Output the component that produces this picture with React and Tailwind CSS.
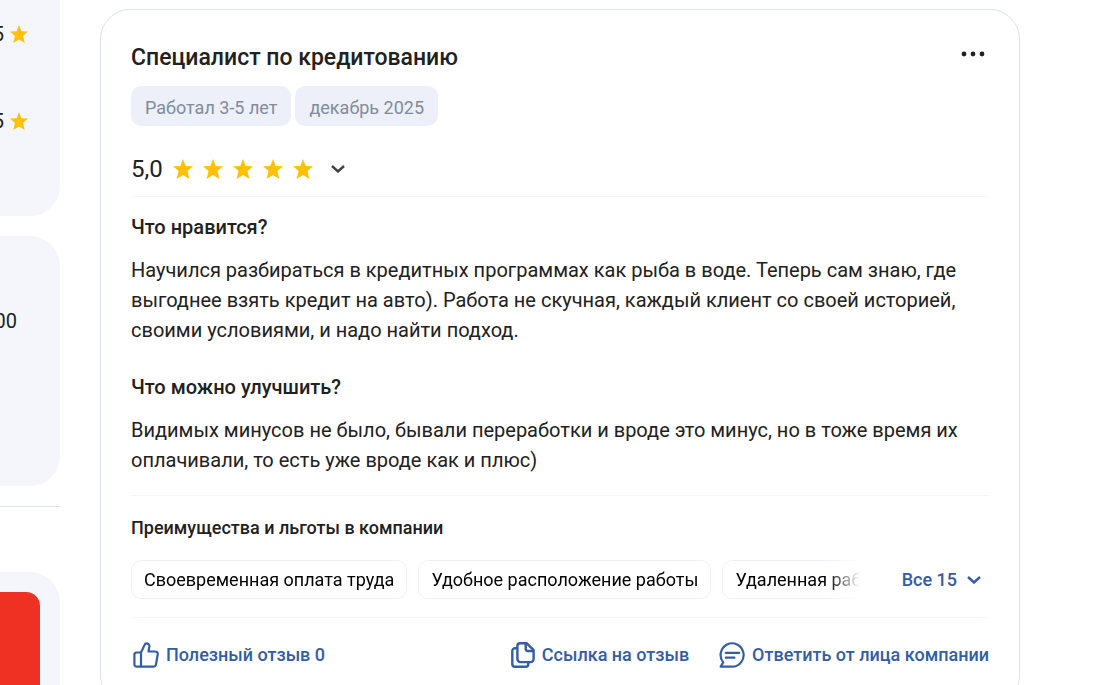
import clsx from "clsx";

const benefits = ["Своевременная оплата труда", "Удобное расположение работы", "Удаленная работа"];

function Star({ className }) {
  return (
    <svg viewBox="0 0 20 20" className={clsx("shrink-0", className)} fill="#ffc107" aria-hidden="true">
      <path d="M10 0l2.700 6.900 7.300.4-5.500 4.800 1.900 7.900L10 16 3.600 20l1.900-7.900L0 7.300l7.300-.4z" />
    </svg>
  );
}

function Chevron() {
  return (
    <svg viewBox="0 0 14 8" className="h-2 w-[14px]" fill="none" stroke="currentColor" strokeWidth="2.4" aria-hidden="true">
      <path d="M1 1l6 5.5L13 1" />
    </svg>
  );
}

function ThumbIcon() {
  return (
    <svg viewBox="0 0 26 26" className="h-[26px] w-[26px]" fill="none" stroke="currentColor" strokeWidth="2.2" strokeLinejoin="round" aria-hidden="true">
      <path d="M8 10.500H3.600A2.200 2.200 0 0 0 1.400 12.700v9.700A2.200 2.200 0 0 0 3.600 24.600H8z" />
      <path d="M8 10.500l3.600-7.600c.4-1 1-1.600 1.800-1.600 1.700 0 3.100 1.400 3 3.100l-.9 5.100h6.400c1.900 0 3.100 1.300 2.800 3l-1.700 9.900c-.2 1.300-1.200 2.200-2.600 2.200H8" />
    </svg>
  );
}

function CopyIcon() {
  return (
    <svg viewBox="0 0 24 26" className="h-[26px] w-6" fill="none" stroke="currentColor" strokeWidth="2.4" strokeLinejoin="round" aria-hidden="true">
      <path d="M9 1.3h6.800l6.800 6.800v9a3 3 0 0 1-3 3H9.400a3 3 0 0 1-3-3V4a2.700 2.700 0 0 1 2.600-2.700z" />
      <path d="M14.700 1.300v5.800a1.900 1.900 0 0 0 1.900 1.900h6" />
      <path d="M6.400 6.200H4a2.700 2.700 0 0 0-2.700 2.700V22a2.700 2.700 0 0 0 2.700 2.700h10.600a2.700 2.700 0 0 0 2.700-2.700v-1.900" />
    </svg>
  );
}

function ReplyIcon() {
  return (
    <svg viewBox="0 0 26 26" className="h-[26px] w-[26px]" fill="none" stroke="currentColor" strokeWidth="2.2" strokeLinecap="round" strokeLinejoin="round" aria-hidden="true">
      <path d="M4.200 20.400A11.500 11.700 0 1 1 13 24.700H1.600z" />
      <path d="M6.800 10.900h13.400M6.800 15.700h8.600" />
    </svg>
  );
}

function ActionButton({ icon: Icon, children }) {
  return (
    <button type="button" className="flex items-center gap-[7px] text-lg font-medium text-[#335da4]">
      <Icon />
      {children}
    </button>
  );
}

function Sidebar() {
  return (
    <aside className="w-[60px] shrink-0 overflow-hidden text-xl text-[#212121]">
      <div className="flex h-[216px] flex-col items-end gap-[57px] rounded-br-[30px] bg-[#f4f6fc] pt-[19px] pr-8">
        {["rating", "salary"].map((key) => (
          <div key={key} className="flex items-center gap-[6px] whitespace-nowrap leading-[30px]">
            <span>4,5</span>
            <Star className="h-[18px] w-[18px]" />
          </div>
        ))}
      </div>
      <div className="mt-5 flex h-[250px] items-center justify-end rounded-r-[30px] bg-[#f4f6fc] pr-[43px]">
        <span className="pb-20">18:00</span>
      </div>
      <hr className="mt-5 border-[#dce1eb]" />
      <div className="mt-[65px] h-80 rounded-r-[30px] bg-[#f4f6fc] pt-5 pr-5">
        <div className="h-[280px] rounded-r-[14px] bg-[#ef3124]" />
      </div>
    </aside>
  );
}

function Answer({ title, children }) {
  return (
    <div>
      <h3 className="text-xl leading-[30px] font-medium">{title}</h3>
      <p className="mt-[13px] text-xl leading-[30px]">{children}</p>
    </div>
  );
}

function Review() {
  return (
    <article className="min-w-0 flex-1 rounded-[30px] border border-[#dce1eb] px-[30px] pt-[33px] pb-9 text-[#212121]">
      <header className="flex items-start justify-between">
        <h2 className="text-[23px] leading-[30px] font-medium">Специалист по кредитованию</h2>
        <button type="button" aria-label="Действия" className="mt-2 mr-1">
          <svg viewBox="0 0 24 6" className="h-[6px] w-6" fill="#212121">
            <circle cx="3" cy="3" r="2.400" />
            <circle cx="12" cy="3" r="2.400" />
            <circle cx="21" cy="3" r="2.400" />
          </svg>
        </button>
      </header>

      <div className="mt-[13px] flex gap-1 text-lg text-[#7f8c9b]">
        <span className="rounded-[10px] bg-[#edf0f8] px-[14px] pt-2 pb-1">Работал 3-5 лет</span>
        <span className="rounded-[10px] bg-[#edf0f8] px-[14px] pt-2 pb-1">декабрь 2025</span>
      </div>

      <div className="mt-[27px] flex items-center pb-[11px] leading-8">
        <span className="text-2xl">5,0</span>
        <div className="ml-[10px] flex gap-[10px]">
          {[1, 2, 3, 4, 5].map((n) => (
            <Star key={n} className="h-5 w-5" />
          ))}
        </div>
        <button type="button" aria-label="Показать оценки" className="ml-[18px] text-[#424242]">
          <Chevron />
        </button>
      </div>

      <div className="flex flex-col gap-[27px] border-y border-[#f4f6fc] pt-[15px] pb-5">
        <Answer title="Что нравится?">
          Научился разбираться в кредитных программах как рыба в воде. Теперь сам знаю, где выгоднее
          взять кредит на авто). Работа не скучная, каждый клиент со своей историей, своими условиями,
          и надо найти подход.
        </Answer>
        <Answer title="Что можно улучшить?">
          Видимых минусов не было, бывали переработки и вроде это минус, но в тоже время их
          оплачивали, то есть уже вроде как и плюс)
        </Answer>
      </div>

      <section className="border-b border-[#f4f6fc] pt-[18px] pb-[18px]">
        <h3 className="text-lg font-medium">Преимущества и льготы в компании</h3>
        <div className="mt-[18px] flex items-center">
          <ul className="flex min-w-0 flex-1 gap-[11px] overflow-hidden mask-r-from-[calc(100%-32px)] mask-r-to-100%">
            {benefits.map((item) => (
              <li key={item} className="shrink-0 rounded-[10px] border border-[#edf0f9] px-3 pt-[5px] pb-1 text-lg whitespace-nowrap text-black">
                {item}
              </li>
            ))}
          </ul>
          <button type="button" className="ml-[42px] flex items-center gap-[10px] pr-2 text-lg font-medium text-[#335da4]">
            Все 15
            <Chevron />
          </button>
        </div>
      </section>

      <footer className="flex items-center justify-between pt-[23px] pl-[2px]">
        <ActionButton icon={ThumbIcon}>Полезный отзыв 0</ActionButton>
        <div className="flex gap-[30px]">
          <ActionButton icon={CopyIcon}>Ссылка на отзыв</ActionButton>
          <ActionButton icon={ReplyIcon}>Ответить от лица компании</ActionButton>
        </div>
      </footer>
    </article>
  );
}

export default function App() {
  return (
    <main className="flex h-screen items-start gap-10 overflow-hidden bg-white pr-[86px] font-['Roboto',sans-serif]">
      <Sidebar />
      <div className="flex min-w-0 flex-1 pt-[9px]">
        <Review />
      </div>
    </main>
  );
}
